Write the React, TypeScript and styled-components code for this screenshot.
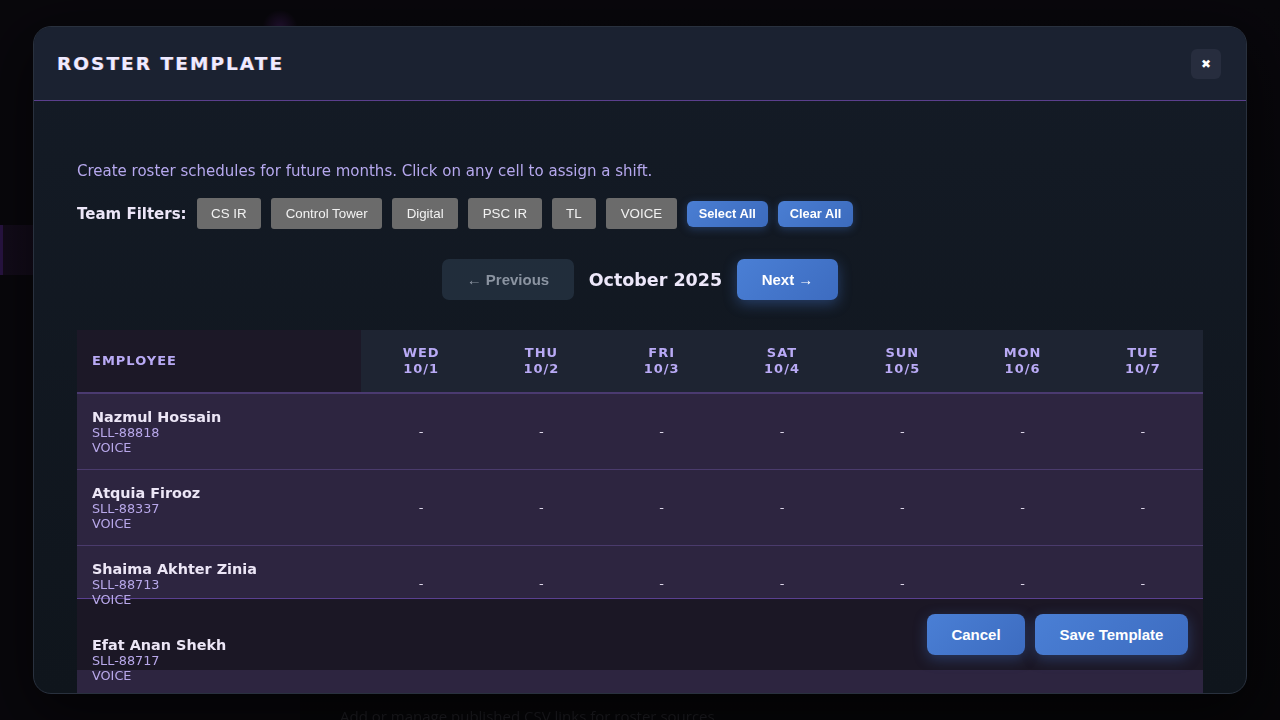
import React from "react";
import styled, { createGlobalStyle } from "styled-components";

const GlobalStyle = createGlobalStyle`
  * { box-sizing: border-box; }
  html, body { margin: 0; padding: 0; background: #0b0a0f; }
  body { font-family: "DejaVu Sans", Verdana, sans-serif; overflow: hidden; }
`;

const Page = styled.div`
  width: 1280px;
  height: 720px;
  display: flex;
  background: linear-gradient(180deg, #0d0b12 0%, #0a090d 100%);
  overflow: hidden;
`;

const Sidebar = styled.aside`
  width: 300px;
  display: flex;
  flex-direction: column;
  padding-top: 225px;
  background: #0d0b12;
`;

const NavItem = styled.div<{ $active?: boolean }>`
  height: 50px;
  border-left: 3px solid ${(p) => (p.$active ? "#3f1f66" : "transparent")};
  background: ${(p) => (p.$active ? "linear-gradient(90deg, #1d1228, #100d16)" : "transparent")};
`;

const Main = styled.main`
  flex: 1;
  display: flex;
  flex-direction: column;
  justify-content: flex-end;
  padding: 0 0 0 40px;
`;

const Glow = styled.div`
  position: absolute;
  left: 262px;
  top: 10px;
  width: 36px;
  height: 36px;
  border-radius: 50%;
  background: radial-gradient(circle, rgba(90, 40, 130, 0.55), rgba(90, 40, 130, 0) 70%);
`;

const FaintText = styled.p`
  margin: 0 0 -6px 0;
  font-family: "Open Sans", sans-serif;
  font-size: 15px;
  color: #2c2c33;
  filter: blur(0.6px);
`;

const Overlay = styled.div`
  position: fixed;
  inset: 0;
  display: flex;
  align-items: center;
  justify-content: center;
  background: rgba(0, 0, 0, 0.35);
`;

const Modal = styled.div`
  position: relative;
  width: 1214px;
  height: 668px;
  display: flex;
  flex-direction: column;
  border: 1px solid #29313e;
  border-radius: 18px;
  background: linear-gradient(180deg, #141b26 0%, #0f151c 100%);
  box-shadow: 0 20px 60px rgba(0, 0, 0, 0.6);
  overflow: hidden;
`;

const Header = styled.header`
  height: 74px;
  flex: none;
  display: flex;
  align-items: center;
  justify-content: space-between;
  padding: 0 25px 0 23px;
  background: #1b2231;
  border-bottom: 1px solid #5b3f8d;
`;

const Title = styled.h2`
  margin: 0 0 1px;
  font-family: "DejaVu Sans", sans-serif;
  font-weight: 700;
  font-size: 18.5px;
  letter-spacing: 2.05px;
  color: #efeaff;
  text-shadow: -0.5px 0 0 rgba(80, 150, 255, 0.5), 0.5px 0 0 rgba(255, 150, 60, 0.5);
`;

const CloseButton = styled.button`
  width: 30px;
  height: 30px;
  display: flex;
  align-items: center;
  justify-content: center;
  border: none;
  border-radius: 6px;
  background: #272d3e;
  color: #ffffff;
  font-size: 12px;
  padding: 0;
  cursor: pointer;
`;

const Body = styled.div`
  position: relative;
  flex: 1;
  display: flex;
  flex-direction: column;
  padding: 61px 43px 0;
  overflow: hidden;
`;

const Description = styled.p`
  margin: 0;
  font-family: "DejaVu Sans", sans-serif;
  font-size: 15px;
  line-height: 19px;
  color: #b6a8ee;
`;

const FilterRow = styled.div`
  margin-top: 17px;
  display: flex;
  align-items: center;
  gap: 10px;
  height: 31px;
`;

const FilterLabel = styled.span`
  font-family: "DejaVu Sans", sans-serif;
  font-weight: 700;
  font-size: 15px;
  color: #ece6f8;
`;

const Chip = styled.button`
  height: 31px;
  padding: 0 14.5px;
  border: none;
  border-radius: 3px;
  background: #6b6b6b;
  color: #f2f2f2;
  font-family: "Liberation Sans", Arial, sans-serif;
  font-size: 13.33px;
`;

const SmallBlue = styled.button`
  height: 26px;
  padding: 0 12px;
  border: none;
  border-radius: 6px;
  background: linear-gradient(135deg, #4a7ed3, #3c6bbd);
  color: #ffffff;
  font-family: "Liberation Sans", Arial, sans-serif;
  font-weight: 700;
  font-size: 12.8px;
  box-shadow: 0 2px 8px rgba(70, 120, 210, 0.35);
`;

const Pager = styled.div`
  margin-top: 30px;
  display: flex;
  align-items: center;
  justify-content: center;
  gap: 15px;
`;

const NavButton = styled.button<{ $primary?: boolean }>`
  height: 41px;
  padding: 0 24.5px;
  border: none;
  border-radius: 7px;
  font-family: "Liberation Sans", Arial, sans-serif;
  font-weight: 700;
  font-size: 15px;
  color: ${(p) => (p.$primary ? "#ffffff" : "#8b94a1")};
  background: ${(p) => (p.$primary ? "linear-gradient(135deg, #4a7fd5, #3d6cc0)" : "#212d3b")};
  box-shadow: ${(p) => (p.$primary ? "0 4px 14px rgba(70, 120, 210, 0.4)" : "none")};
`;

const MonthLabel = styled.span`
  font-family: "DejaVu Sans", sans-serif;
  font-weight: 700;
  font-size: 17.5px;
  color: #ede8fa;
`;

const Table = styled.div`
  margin-top: 30px;
  display: grid;
  grid-template-columns: 284px repeat(7, 1fr);
  flex: none;
`;

const HeadCell = styled.div<{ $employee?: boolean }>`
  height: 64px;
  display: flex;
  flex-direction: column;
  align-items: ${(p) => (p.$employee ? "flex-start" : "center")};
  justify-content: center;
  padding: ${(p) => (p.$employee ? "0 15px" : "0")};
  background: ${(p) => (p.$employee ? "#1c1827" : "#1e2432")};
  border-bottom: 2px solid #4a3a70;
  font-family: "DejaVu Sans", sans-serif;
  font-weight: 700;
  font-size: 13px;
  line-height: 16px;
  letter-spacing: 1px;
  color: #b9aaf5;
`;

const NameCell = styled.div`
  height: 76px;
  display: flex;
  flex-direction: column;
  justify-content: center;
  padding: 0 15px;
  background: #2d2540;
  border-bottom: 1px solid #4a3b6c;
`;

const NameLayer = styled.div`
  position: relative;
  z-index: 3;
  display: flex;
  flex-direction: column;
`;

const NameText = styled.span`
  font-family: "DejaVu Sans", sans-serif;
  font-weight: 700;
  font-size: 14.4px;
  line-height: 16px;
  color: #ece6f6;
`;

const SubText = styled.span`
  font-family: "DejaVu Sans", sans-serif;
  font-size: 12.8px;
  line-height: 15px;
  color: #b8a8ea;
`;

const DayCell = styled.div`
  height: 76px;
  display: flex;
  align-items: center;
  justify-content: center;
  background: #2d2540;
  border-bottom: 1px solid #4a3b6c;
  font-family: "DejaVu Sans", sans-serif;
  font-size: 13px;
  color: #dcd6e8;
`;

const Footer = styled.div`
  position: absolute;
  left: 43px;
  right: 43px;
  bottom: 23px;
  z-index: 2;
  height: 72px;
  display: flex;
  align-items: center;
  justify-content: flex-end;
  gap: 10px;
  padding: 0 15px;
  background: #1b1725;
  border-top: 1px solid #5a4090;
`;

const FooterButton = styled.button<{ $w: number }>`
  width: ${(p) => p.$w}px;
  height: 41px;
  border: none;
  border-radius: 8px;
  background: linear-gradient(135deg, #4a7fd5, #3d6cc0);
  color: #ffffff;
  font-family: "Liberation Sans", Arial, sans-serif;
  font-weight: 700;
  font-size: 15px;
  box-shadow: 0 4px 14px rgba(70, 120, 210, 0.35);
`;

const teams = ["CS IR", "Control Tower", "Digital", "PSC IR", "TL", "VOICE"];
const days = [
  ["WED", "10/1"],
  ["THU", "10/2"],
  ["FRI", "10/3"],
  ["SAT", "10/4"],
  ["SUN", "10/5"],
  ["MON", "10/6"],
  ["TUE", "10/7"],
];
const employees = [
  { name: "Nazmul Hossain", id: "SLL-88818", team: "VOICE" },
  { name: "Atquia Firooz", id: "SLL-88337", team: "VOICE" },
  { name: "Shaima Akhter Zinia", id: "SLL-88713", team: "VOICE" },
  { name: "Efat Anan Shekh", id: "SLL-88717", team: "VOICE" },
];

export default function App() {
  return (
    <>
      <GlobalStyle />
      <Page>
        <Glow />
        <Sidebar>
          <NavItem $active />
        </Sidebar>
        <Main>
          <FaintText>Add or manage published CSV links for roster sources</FaintText>
        </Main>
      </Page>
      <Overlay>
        <Modal>
          <Header>
            <Title>ROSTER TEMPLATE</Title>
            <CloseButton aria-label="Close">✖</CloseButton>
          </Header>
          <Body>
            <Description>
              Create roster schedules for future months. Click on any cell to assign a shift.
            </Description>
            <FilterRow>
              <FilterLabel>Team Filters:</FilterLabel>
              {teams.map((t) => (
                <Chip key={t}>{t}</Chip>
              ))}
              <SmallBlue>Select All</SmallBlue>
              <SmallBlue>Clear All</SmallBlue>
            </FilterRow>
            <Pager>
              <NavButton>← Previous</NavButton>
              <MonthLabel>October 2025</MonthLabel>
              <NavButton $primary>Next →</NavButton>
            </Pager>
            <Table>
              <HeadCell $employee>EMPLOYEE</HeadCell>
              {days.map(([d, n]) => (
                <HeadCell key={d}>
                  <span>{d}</span>
                  <span>{n}</span>
                </HeadCell>
              ))}
              {employees.map((e) => (
                <React.Fragment key={e.id}>
                  <NameCell>
                    <NameLayer>
                      <NameText>{e.name}</NameText>
                      <SubText>{e.id}</SubText>
                      <SubText>{e.team}</SubText>
                    </NameLayer>
                  </NameCell>
                  {days.map(([d]) => (
                    <DayCell key={d}>-</DayCell>
                  ))}
                </React.Fragment>
              ))}
            </Table>
            <Footer>
              <FooterButton $w={98}>Cancel</FooterButton>
              <FooterButton $w={153}>Save Template</FooterButton>
            </Footer>
          </Body>
        </Modal>
      </Overlay>
    </>
  );
}
